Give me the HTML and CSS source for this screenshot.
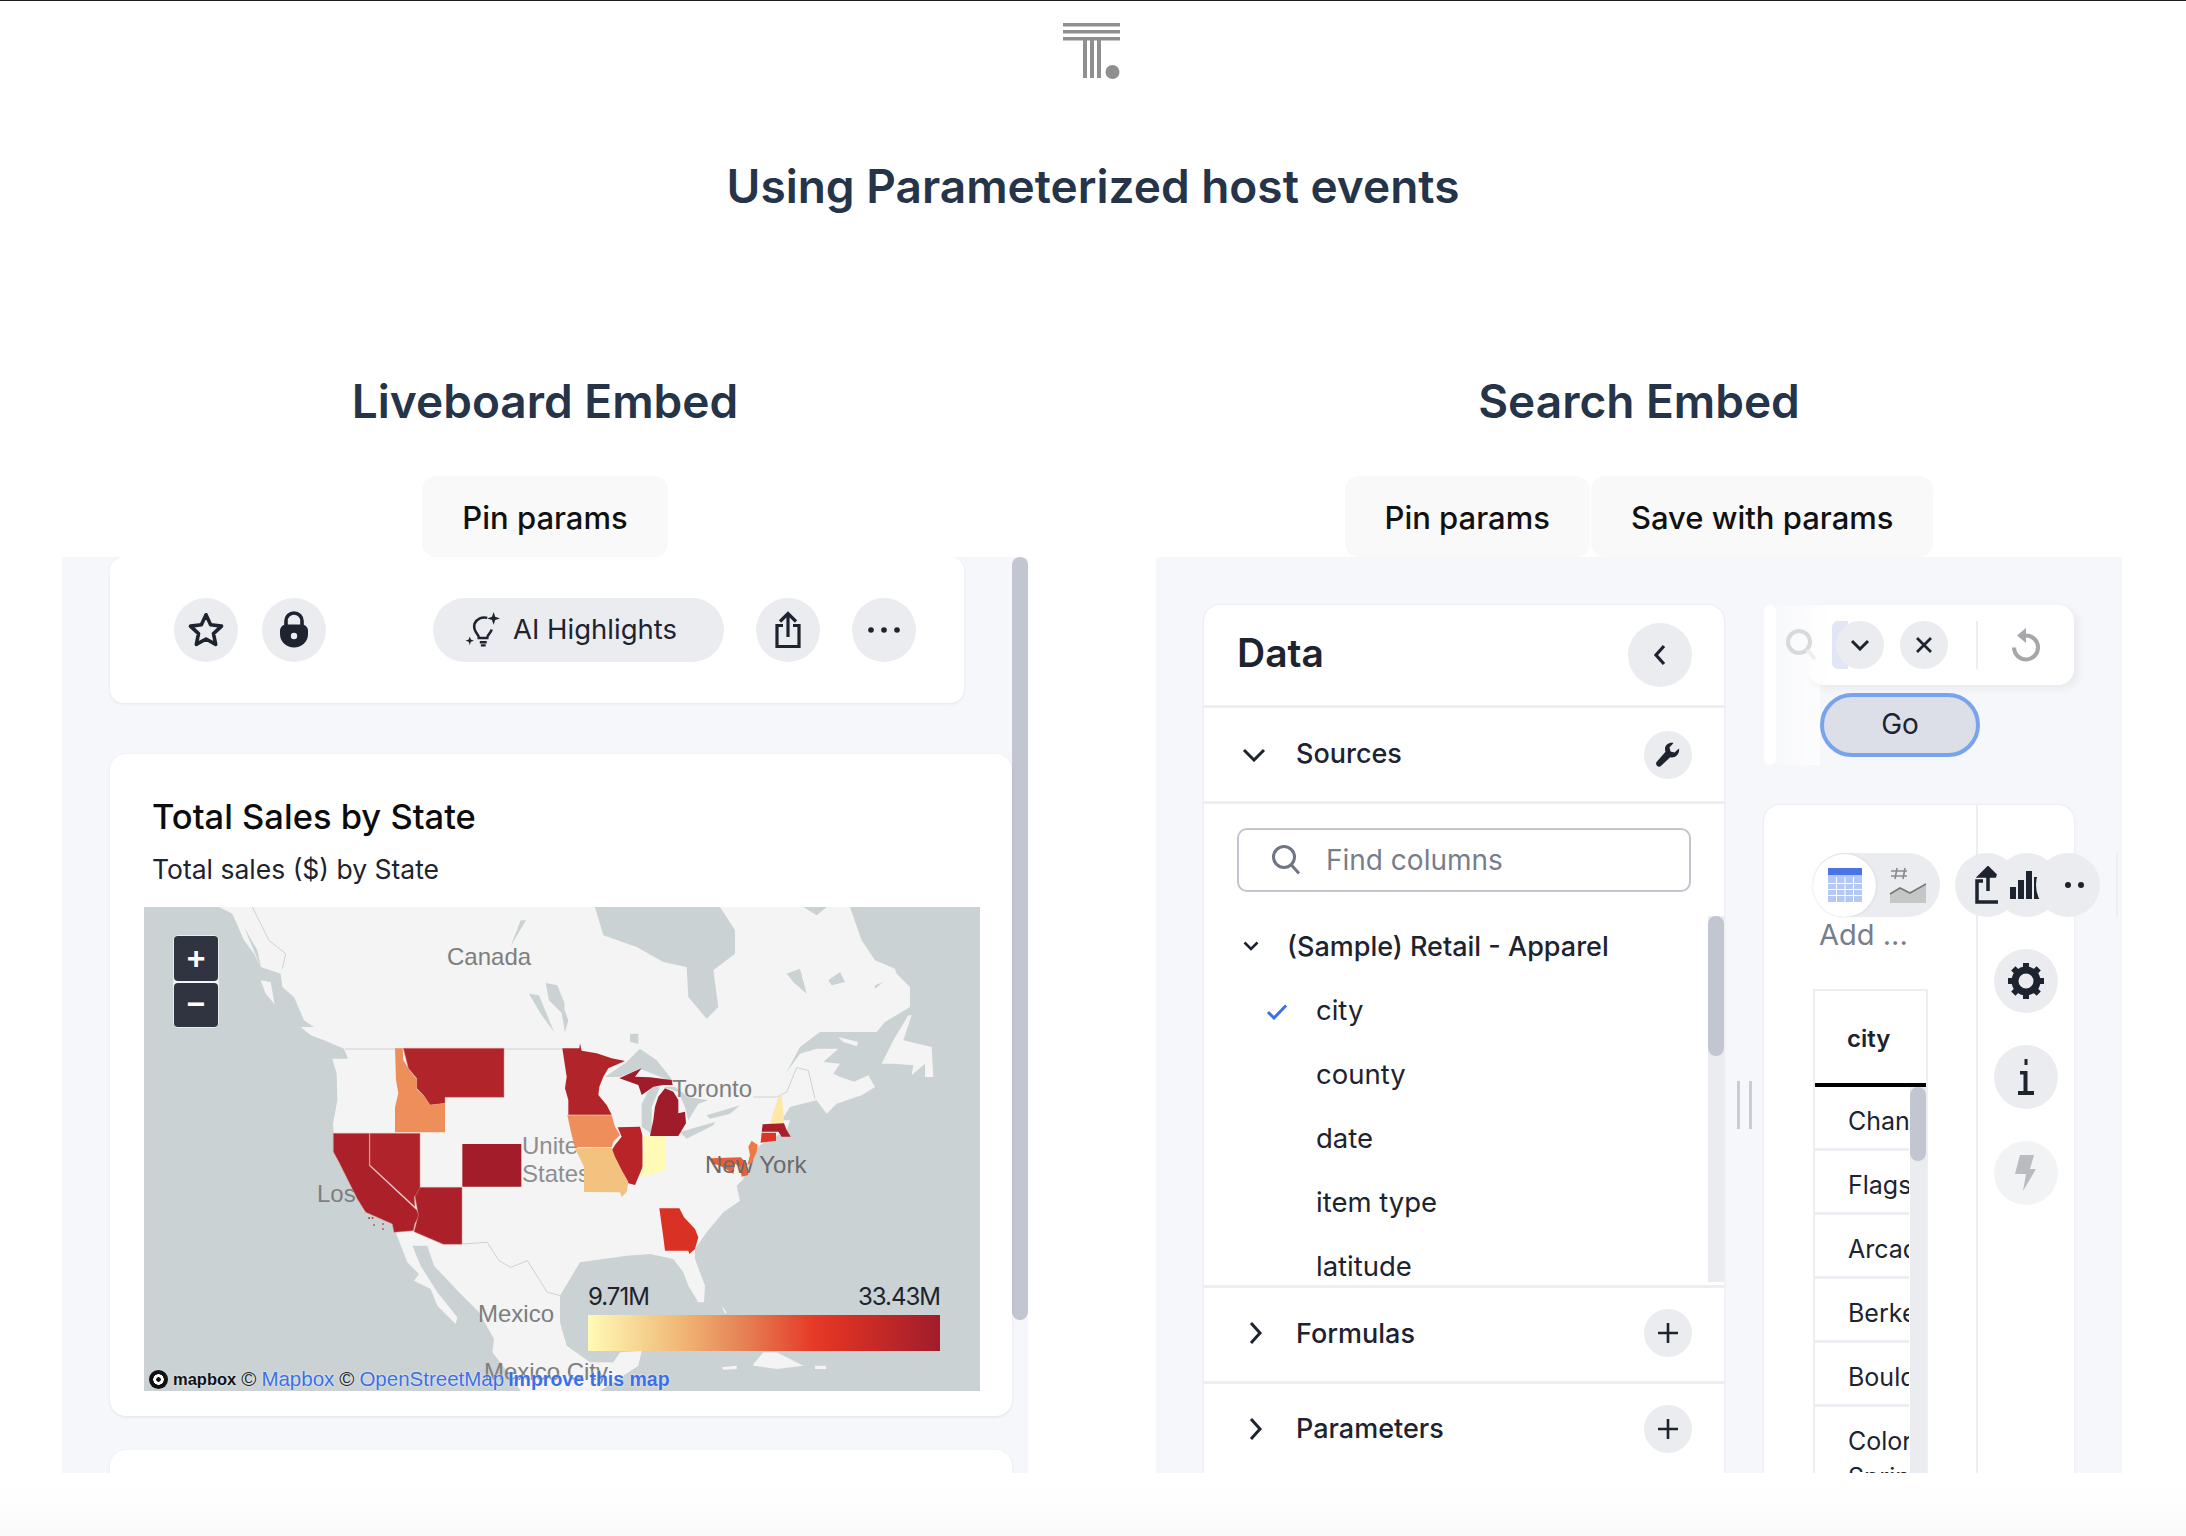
FILE: index.html
```html
<!DOCTYPE html>
<html lang="en">
<head>
<meta charset="utf-8">
<title>Using Parameterized host events</title>
<link rel="stylesheet" href="styles.css">
</head>
<body>
<div class="page">
  <header class="logo-row">
    <svg class="logo" width="58" height="56" viewBox="0 0 58 56">
      <g fill="#8f8f8f">
        <rect x="0" y="0" width="57" height="3.5"/><rect x="0" y="7" width="57" height="3.5"/><rect x="0" y="14" width="57" height="3.5"/>
        <rect x="20" y="17" width="4" height="38"/><rect x="27" y="17" width="4" height="38"/><rect x="34" y="17" width="4" height="38"/>
        <circle cx="49.5" cy="49" r="7"/>
      </g>
    </svg>
  </header>
  <h1 class="title">Using Parameterized host events</h1>
  <main class="embeds">
    <section class="embed">
      <h2 class="embed-title">Liveboard Embed</h2>
      <div class="btn-row"><button class="host-btn">Pin params</button></div>
      <div class="panel panel-live">
        <div class="live-content">
          <div class="lb-toolbar">
            <span class="circle c64"><svg width="40" height="40" viewBox="0 0 38 38"><path d="M19 4.500l4.400 9.600 10.400 1.200-7.700 7.100 2.100 10.300L19 27.500l-9.200 5.200 2.100-10.300-7.700-7.100 10.400-1.200z" fill="none" stroke="#1d232f" stroke-width="3.400" stroke-linejoin="round"/></svg></span>
            <span class="circle c64 gap-lock"><svg width="32" height="38" viewBox="0 0 32 38"><path d="M8 15V10a8 8 0 0 1 16 0v5" fill="none" stroke="#1d232f" stroke-width="3.600"/><path d="M2 20c0-4 3-6.500 6-6.500h16c3 0 6 2.500 6 6.500v3c0 8-6.500 13.500-14 13.500S2 31 2 23z" fill="#1d232f"/><circle cx="16" cy="25" r="3.200" fill="#eceef2"/></svg></span>
            <span class="ai-pill">
              <svg width="36" height="36" viewBox="0 0 34 34"><path d="M21 6.500A10 10 0 0 0 9 12c-1.500 5 1 8 3 10.500.8 1 1 2 1 3h8c0-1.500.8-3 2-4.200 1-1 1.800-2.300 2.200-3.800" fill="none" stroke="#1d232f" stroke-width="2.400"/><path d="M14 29.500h6.500M15 32.500h4.500" stroke="#1d232f" stroke-width="2.200"/><path d="M27 1l1.500 4.500L33 7l-4.500 1.500L27 13l-1.500-4.500L21 7l4.500-1.500zM4.500 24l1 3 3 1-3 1-1 3-1-3-3-1 3-1z" fill="#1d232f"/></svg>
              <span>AI Highlights</span>
            </span>
            <span class="circle c64 gap-share"><svg width="28" height="38" viewBox="0 0 28 38"><path d="M14 26V3M6 10.500L14 2.500l8 8" fill="none" stroke="#1d232f" stroke-width="3.200"/><path d="M9 14.500H3v21h22v-21h-6" fill="none" stroke="#1d232f" stroke-width="3.200"/></svg></span>
            <span class="circle c64 gap-more"><svg width="34" height="8" viewBox="0 0 34 8"><circle cx="4" cy="4" r="2.800" fill="#1d232f"/><circle cx="17" cy="4" r="2.800" fill="#1d232f"/><circle cx="30" cy="4" r="2.800" fill="#1d232f"/></svg></span>
          </div>
          <article class="chart-card">
            <h3 class="chart-title">Total Sales by State</h3>
            <p class="chart-sub">Total sales ($) by State</p>
            <div class="map">
              <svg class="map-svg" width="836" height="484" viewBox="144 907 836 484">
                <rect x="144" y="907" width="836" height="484" fill="#cad2d3"/>
                <g class="land" transform="translate(144 907) scale(.33333)">
                  <path fill="#f3f4f3" d="M225 0L265 20L300 100L330 140L350 180L410 200L415 240L450 270L480 340L510 360L470 360L500 385L540 400L600 425L612 455L565 455L578 500L580 580L567 650L570 690L568 726L585 766L610 816L640 876L665 916L745 951L755 976L790 1066L825 1101L810 1121L860 1146L880 1196L935 1251L940 1231L880 1156L830 1076L805 1016L850 1016L870 1076L945 1156L1005 1216L1050 1296L1045 1336L1100 1406L1130 1452L1368 1452L1483 1376L1493 1332L1428 1336L1408 1366L1338 1366L1268 1316L1248 1246L1248 1166L1308 1066L1378 1056L1448 1046L1518 1041L1588 1056L1618 1096L1633 1136L1663 1186L1680 1186L1683 1136L1653 1056L1653 1026L1688 976L1738 916L1788 881L1778 836L1798 816L1808 786L1838 726L1848 715L1928 670L1938 640L1913 640L1938 600L2018 580L2048 620L2078 590L2153 565L2193 540L2173 505L2128 525L2088 510L2068 500L2088 470L2038 465L2083 425L2018 425L1968 440L1928 495L1968 420L2028 375L2128 375L2198 375L2223 345L2298 300L2298 240L2258 200L2253 185L2193 160L2153 100L2118 0L2048 0L2018 25L1978 0L1728 0L1773 70L1773 140L1708 190L1723 300L1688 335L1633 270L1628 180L1558 165L1478 120L1378 85L1353 0Z"/>
                  <path fill="#f3f4f3" d="M350 220L380 225L392 292L365 260ZM2213 470L2248 400L2293 325L2303 325L2278 400L2363 420L2368 510L2343 510L2343 470L2303 505L2308 475L2248 470ZM2083 390L2143 405L2138 418L2098 405ZM2088 510L2133 525L2128 535ZM1733 1381L1778 1376L1778 1386L1738 1388ZM1828 1371L1858 1336L1898 1336L1978 1376L1898 1386L1828 1376ZM2013 1376L2046 1376L2046 1386L2013 1386ZM1733 1196L1748 1216L1743 1221Z"/>
                  <path fill="#cad2d3" d="M1130 40L1146 40L1100 118ZM1205 228L1240 235L1262 290L1260 325L1215 280ZM1155 260L1185 265L1230 375L1190 320ZM300 60L340 130L352 185L325 120ZM1248 270L1273 340L1263 375L1253 320ZM1458 380L1483 380L1483 410L1458 405ZM1383 510L1448 465L1488 425L1538 460L1578 510L1588 525L1488 485L1428 510ZM1523 535L1548 540L1523 600L1523 680L1493 660L1493 590ZM1558 540L1593 540L1633 570L1693 580L1663 590L1633 640L1623 600L1603 555ZM1608 675L1713 645L1708 655L1628 695ZM1688 625L1788 595L1758 620L1698 635ZM1928 200L1968 185L1988 260L1948 225ZM2053 220L2088 195L2103 225L2063 235ZM2193 235L2218 225L2193 245Z"/>
                  <path d="M603 426H1255M1473 450L1578 510M1828 570L1898 570L1928 555L1958 482L1993 490L2013 575M955 1011L1030 1006L1065 1061L1100 1081L1150 1061L1210 1156L1250 1166M325 0L375 100L425 140L415 185" fill="none" stroke="#cfd1d1" stroke-width="3"/>
                </g>
                <text class="maplabel" x="447" y="965">Canada</text>
                <text class="maplabel" x="672" y="1097">Toronto</text>
                <text class="maplabel light" x="522" y="1154">Unite</text>
                <text class="maplabel light" x="522" y="1182">States</text>
                <text class="maplabel" x="317" y="1202">Los</text>
                <text class="maplabel" x="478" y="1322">Mexico</text>
                <text class="maplabel" x="484" y="1380">Mexico City</text>
                <g transform="translate(320 1020) scale(.33333)">
                  <path fill="#ea5e36" d="M1172 415L1262 412L1280 430L1285 465L1265 470L1260 440L1245 432L1240 462L1215 445L1195 435L1178 432Z"/>
                </g>
                <text class="maplabel dark" x="705" y="1173">New York</text>
                <g transform="translate(320 1020) scale(.33333)" stroke="#d98b85" stroke-width="1.500">
                  <path fill="#b1242a" d="M250 85L552 85L552 232L375 232L375 250L330 255L310 225L290 205L290 175L265 145Z"/>
                  <path fill="#ee8f5b" stroke="none" d="M225 85L248 85L250 120L268 150L290 178L290 208L312 228L330 255L375 250L375 337L225 337L225 262L235 220L228 180Z"/>
                  <path fill="#b1242a" stroke="none" d="M727 85L778 85L780 70L785 92L830 100L875 115L915 123L865 145L850 170L838 200L835 225L860 255L875 284L745 284L745 240L735 205L740 170Z"/>
                  <path fill="#a11c2b" stroke="none" d="M898 175L940 155L965 145L945 170L990 172L1055 180L1058 195L1030 195L1000 200L965 225L955 195ZM1035 205L1060 215L1075 240L1075 280L1095 275L1098 310L1075 348L990 348L1000 300L1005 260L1015 230Z"/>
                  <path fill="#ee8f5b" stroke="none" d="M742 286L875 286L885 320L900 345L880 365L875 382L765 382L755 345Z"/>
                  <path fill="#b92429" stroke="none" d="M893 322L960 320L967 345L968 440L960 460L945 495L925 490L900 455L870 400L885 375L905 350Z"/>
                  <path fill="#f4c27f" stroke="none" d="M765 385L875 383L885 410L905 450L925 485L920 515L905 532L900 517L792 516L792 440Z"/>
                  <path fill="#fffbb6" stroke="none" d="M970 348L1038 348L1038 450L1000 462L960 472L968 440Z"/>
                  <path fill="#d93225" stroke="none" d="M1018 565L1078 565L1092 592L1125 627L1135 652L1125 687L1108 702L1105 692L1035 692L1030 652Z"/>
                  <path fill="#ab2029" d="M40 340L148 340L148 437L290 570L298 587L285 610L280 632L222 637L217 612L137 577L112 537L82 477L57 427L40 395Z"/>
                  <path fill="#b1232a" d="M150 340L300 340L300 520L283 530L285 560L150 435Z"/>
                  <path fill="#ab2029" d="M300 502L426 502L426 673L370 673L282 635L295 585L285 530Z"/>
                  <path fill="#a21c2a" stroke="none" d="M427 372L604 372L604 500L427 500Z"/>
                  <path fill="#fde9a5" stroke="none" d="M1378 225L1385 225L1392 300L1392 312L1350 312L1362 270Z"/>
                  <path fill="#a81e2a" stroke="none" d="M1328 313L1392 310L1400 330L1412 350L1385 350L1375 335L1325 335Z"/>
                  <path fill="#dc3425" stroke="none" d="M1325 338L1368 338L1368 362L1322 368Z"/>
                  <path fill="#ee7a42" stroke="none" d="M1295 362L1313 375L1310 395L1295 430L1282 435L1290 405L1285 380Z"/>
                  <path fill="#ab2029" stroke="none" d="M145 592h5v4h-5zM155 592h5v4h-5zM160 613h4v4h-4zM187 610h4v4h-4zM187 625h4v4h-4z"/>
                </g>
              </svg>
              <div class="zoom-ctl"><span class="zoom-btn">+</span><span class="zoom-btn">−</span></div>
              <div class="legend">
                <div class="legend-vals"><span>9.71M</span><span>33.43M</span></div>
                <div class="legend-bar"></div>
              </div>
              <div class="attrib">
                <span class="mb-logo"><i class="mb-dot"></i>mapbox</span>
                <span class="mb-c">©</span><span class="mb-link">Mapbox</span><span class="mb-c">©</span><span class="mb-link">OpenStreetMap</span><span class="mb-link strong">Improve this map</span>
              </div>
            </div>
          </article>
          <div class="next-card"></div>
        </div>
        <div class="live-scroll"></div>
      </div>
    </section>

    <section class="embed">
      <h2 class="embed-title">Search Embed</h2>
      <div class="btn-row btn-row-tight"><button class="host-btn">Pin params</button><button class="host-btn">Save with params</button></div>
      <div class="panel panel-search">
        <aside class="data-panel">
          <div class="data-head">
            <span class="data-title">Data</span>
            <span class="circle c64"><svg width="16" height="24" viewBox="0 0 16 24"><path d="M12 3L4 12l8 9" fill="none" stroke="#1d232f" stroke-width="3.200"/></svg></span>
          </div>
          <div class="data-row row-sources">
            <svg class="chev" width="24" height="14" viewBox="0 0 24 14"><path d="M2 2l10 10L22 2" fill="none" stroke="#1d232f" stroke-width="3"/></svg>
            <span class="row-label">Sources</span>
            <span class="circle c48"><svg width="28" height="28" viewBox="0 0 28 28"><path d="M25 7.500l-4.500 4-4-1-1-4 4-4.500c-4-1-8.500 1.500-8.500 6 0 1 .2 2 .5 2.800L3 20.500c-1.500 1.500-1 3.200 0 4.200s2.800 1.500 4.200 0l9-8.500c4.800 1.300 9.800-3 8.800-8.700z" fill="#1d232f"/></svg></span>
          </div>
          <div class="find-wrap">
            <div class="find">
              <svg width="32" height="32" viewBox="0 0 32 32"><circle cx="14" cy="13" r="10.500" fill="none" stroke="#6f7684" stroke-width="3"/><path d="M21.500 21L29 29.500" stroke="#6f7684" stroke-width="3"/></svg>
              <span>Find columns</span>
            </div>
          </div>
          <div class="col-list">
            <div class="col-scroll"><div class="col-thumb"></div></div>
            <div class="col-group">
              <svg width="16" height="10" viewBox="0 0 16 10"><path d="M1.500 1.500L8 8l6.500-6.500" fill="none" stroke="#1d232f" stroke-width="2.600"/></svg>
              <span>(Sample) Retail - Apparel</span>
            </div>
            <div class="col-item"><svg class="check" width="22" height="16" viewBox="0 0 22 16"><path d="M2 8l6 6L20 1.500" fill="none" stroke="#3d6fe5" stroke-width="3"/></svg><span>city</span></div>
            <div class="col-item"><span>county</span></div>
            <div class="col-item"><span>date</span></div>
            <div class="col-item"><span>item type</span></div>
            <div class="col-item"><span>latitude</span></div>
          </div>
          <div class="data-row row-formulas">
            <svg class="chev" width="14" height="24" viewBox="0 0 14 24"><path d="M3 2l9 10-9 10" fill="none" stroke="#1d232f" stroke-width="3"/></svg>
            <span class="row-label">Formulas</span>
            <span class="circle c48"><svg width="24" height="24" viewBox="0 0 24 24"><path d="M12 2v20M2 12h20" stroke="#1d232f" stroke-width="2.600"/></svg></span>
          </div>
          <div class="data-row row-params">
            <svg class="chev" width="14" height="24" viewBox="0 0 14 24"><path d="M3 2l9 10-9 10" fill="none" stroke="#1d232f" stroke-width="3"/></svg>
            <span class="row-label">Parameters</span>
            <span class="circle c48"><svg width="24" height="24" viewBox="0 0 24 24"><path d="M12 2v20M2 12h20" stroke="#1d232f" stroke-width="2.600"/></svg></span>
          </div>
        </aside>
        <div class="resizer"><i></i><i></i></div>
        <div class="work">
          <div class="search-area">
            <div class="strip"></div>
            <div class="fade"></div>
            <svg class="faint-search" width="36" height="36" viewBox="0 0 36 36"><circle cx="14" cy="14" r="11" fill="none" stroke="#d8d9db" stroke-width="4"/><path d="M22 22l8 9" stroke="#eeeeef" stroke-width="4"/></svg>
            <div class="search-col">
              <div class="search-bar">
                <span class="token"></span>
                <span class="circle c48 on-token"><svg width="20" height="12" viewBox="0 0 20 12"><path d="M2 2l8 8 8-8" fill="none" stroke="#1d232f" stroke-width="3"/></svg></span>
                <span class="circle c48 x-btn"><svg width="20" height="20" viewBox="0 0 20 20"><path d="M3 3l14 14M17 3L3 17" stroke="#1d232f" stroke-width="2.800"/></svg></span>
                <span class="vline"></span>
                <svg class="undo" width="30" height="34" viewBox="0 0 30 34"><path d="M15 7.500a12 12 0 1 1-12 12" fill="none" stroke="#a5a7aa" stroke-width="4"/><path d="M15 0v15L6 7.500z" fill="#a5a7aa"/></svg>
              </div>
              <button class="go">Go</button>
            </div>
          </div>
          <div class="viz-card">
            <div class="viz-main">
              <div class="viz-tools">
                <div class="toggle">
                  <span class="toggle-on">
                    <svg width="34" height="34" viewBox="0 0 34 34"><rect width="34" height="34" fill="#b5c8f3"/><rect width="34" height="7" fill="#4a74e6"/><path d="M8.500 9v25M17 9v25M25.500 9v25M0 15.500h34M0 21.500h34M0 27.500h34" stroke="#fff" stroke-width="1"/></svg>
                  </span>
                  <svg class="toggle-off" width="38" height="36" viewBox="0 0 38 36"><path d="M6 12l2-11M14 12l2-11M2 4h16M2 9h16" stroke="#8a8a8a" stroke-width="1.600" fill="none"/><path d="M1 27l10-6 10 5 16-9v19H1z" fill="#c6c6c6"/><path d="M1 27l10-6 10 5 16-9" fill="none" stroke="#777" stroke-width="1.600"/></svg>
                </div>
                <span class="circle c64 tool1"><svg width="24" height="38" viewBox="0 0 24 38"><path d="M13 25V3M5 10l8-8 8 8z" fill="#1d232f" stroke="#1d232f" stroke-width="3.500"/><path d="M8 15H2v21h21" fill="none" stroke="#1d232f" stroke-width="3.500"/></svg></span>
                <span class="circle c64 tool2"><svg class="bars" width="30" height="28" viewBox="0 0 30 28"><path d="M0 16h6v12H0zM8 9h6v19H8zM16 0h6v28h-6zM24 6h6v22h-6z" fill="#1d232f"/></svg></span>
                <span class="circle c64 tool3"><svg class="dots" width="20" height="6" viewBox="0 0 20 6"><circle cx="3" cy="3" r="3" fill="#1d232f"/><circle cx="16" cy="3" r="3" fill="#1d232f"/></svg></span>
              </div>
              <div class="add-label">Add ...</div>
              <div class="result-table">
                <div class="th">city</div>
                <div class="tbody">
                  <div class="td">Chandler</div>
                  <div class="td">Flagstaff</div>
                  <div class="td">Arcadia</div>
                  <div class="td">Berkeley</div>
                  <div class="td">Boulder</div>
                  <div class="td">Colorado Springs</div>
                </div>
                <div class="tscroll"><div class="tthumb"></div></div>
              </div>
            </div>
            <div class="viz-side">
              <span class="circle c64"><svg width="38" height="38" viewBox="0 0 38 38"><circle cx="19" cy="19" r="11" fill="none" stroke="#1d232f" stroke-width="7"/><path d="M19 1v7M19 30v7M1 19h7M30 19h7M6.300 6.300l5 5M26.700 26.700l5 5M6.300 31.700l5-5M26.700 11.300l5-5" stroke="#1d232f" stroke-width="6"/></svg></span>
              <span class="circle c64"><svg width="18" height="36" viewBox="0 0 18 36"><path d="M7.500 0h3v6h-3zM3 12h7.500v20H17v4H1v-4h5.500V15.500H3z" fill="#1d232f"/></svg></span>
              <span class="circle c64 faded"><svg class="bolt" width="22" height="36" viewBox="0 0 22 36"><path d="M6 0h14l-4 14h6L9 36l3-17H1z" fill="#8d8f93"/></svg></span>
            </div>
          </div>
          <div class="edge-line"></div>
        </div>
      </div>
    </section>
  </main>
  <footer class="foot"></footer>
</div>
</body>
</html>
```
FILE: styles.css
```css
* { box-sizing: border-box; }
html, body { margin: 0; padding: 0; background: #fff; }
body { font-family: Inter, "Noto Sans", sans-serif; color: #1d232f; }
.page { width: 2186px; height: 1536px; overflow: hidden; border-top: 1px solid #1c1c1c; display: flex; flex-direction: column; }
.logo-row { height: 79px; display: flex; justify-content: center; padding-top: 22px; padding-right: 2px; }
.logo { display: block; }
.title { margin: 76px 0 0; height: 60px; line-height: 60px; text-align: center; font-size: 46px; font-weight: 600; color: #253449; }
.embeds { display: grid; grid-template-columns: 966px 966px; column-gap: 128px; padding-left: 62px; margin-top: 157px; }
.embed { display: flex; flex-direction: column; }
.embed-title { margin: 0; height: 56px; line-height: 56px; text-align: center; font-size: 46px; font-weight: 600; color: #253449; }
.btn-row { display: flex; justify-content: center; margin-top: 47px; }
.btn-row-tight { gap: 1px; }
.host-btn { height: 81px; padding: 2px 40px 0; border: 0; border-radius: 14px; background: #f9f9f9; font: 500 31px Inter, sans-serif; color: #111; }
.panel { height: 916px; background: #f6f7fa; overflow: hidden; display: flex; }
.circle { flex: none; display: inline-flex; align-items: center; justify-content: center; border-radius: 50%; background: #ebecf0; }
.c64 { width: 64px; height: 64px; }
.c48 { width: 48px; height: 48px; }

/* Liveboard */
.panel-live { padding-left: 48px; }
.live-content { width: 902px; display: flex; flex-direction: column; flex: none; }
.live-scroll { width: 16px; height: 763px; background: #c1c6d0; border-radius: 8px; flex: none; }
.lb-toolbar { width: 854px; height: 146px; flex: none; background: #fff; border-radius: 14px; box-shadow: 0 1px 3px rgba(30,40,70,.09); display: flex; align-items: flex-start; padding: 41px 0 0 64px; }
.gap-lock { margin-left: 24px; }
.ai-pill { margin-left: 107px; width: 291px; height: 64px; padding: 0 0 2px 32px; border-radius: 32px; background: #ebecf0; display: flex; align-items: center; gap: 12px; font-size: 27.500px; }
.gap-share { margin-left: 32px; }
.gap-more { margin-left: 32px; }
.chart-card { margin-top: 51px; height: 662px; flex: none; background: #fff; border-radius: 16px; box-shadow: 0 1px 3px rgba(30,40,70,.1); padding: 41px 0 0 34px; position: relative; }
.chart-title { margin: 0 0 0 8px; font-size: 34.500px; line-height: 44px; font-weight: 500; color: #0c0c0c; }
.chart-sub { margin: 12px 0 0 8px; font-size: 26.500px; line-height: 36px; color: #1d232f; }
.map { position: relative; margin-top: 20px; width: 836px; height: 484px; overflow: hidden; }
.map-svg { display: block; }
.land { filter: blur(.5px); }
.maplabel { font-family: "Liberation Sans", Arial, sans-serif; font-size: 24px; fill: #7e7e7e; }
.maplabel.light { fill: #8e8e8e; }
.maplabel.dark { fill: #6a6a6a; }
.zoom-ctl { position: absolute; left: 30px; top: 29px; width: 44px; height: 91px; display: flex; flex-direction: column; background: #f4f5f6; gap: 2px; border-radius: 5px; box-shadow: 0 0 0 1px rgba(255,255,255,.6); }
.zoom-btn { flex: 1; display: flex; align-items: center; justify-content: center; background: #303441; color: #fff; font: 700 32px "Liberation Sans", sans-serif; border-radius: 4px; }
.legend { position: absolute; left: 444px; top: 374px; width: 352px; }
.legend-vals { display: flex; justify-content: space-between; font-size: 24px; line-height: 32px; letter-spacing: -1px; color: #1d232f; }
.legend-bar { margin-top: 2px; height: 36px; background: linear-gradient(90deg, #fffbb6 0%, #f0b574 27%, #e57f54 45%, #e63a27 64%, #d83024 73%, #a01c2b 100%); }
.attrib { position: absolute; left: 5px; bottom: -3px; height: 30px; display: flex; align-items: center; font: 20.500px "Liberation Sans", sans-serif; color: #222; white-space: nowrap; text-shadow: 0 0 2px #fff; }
.mb-logo { display: flex; align-items: center; gap: 5px; font: 700 16.500px "Liberation Sans", sans-serif; color: #111; }
.mb-dot { width: 19px; height: 19px; border-radius: 50%; background: radial-gradient(circle, #111 0 2px, #fff 2.500px 5px, #111 5.500px); }
.mb-c { margin: 0 5px; }
.mb-link { color: #3b6fe8; }
.strong { font-weight: 700; font-size: 19.500px; margin-left: 4px; }
.next-card { margin-top: 34px; height: 120px; flex: none; background: #fff; border-radius: 16px; box-shadow: 0 1px 3px rgba(30,40,70,.1); }

/* Search */
.panel-search { padding: 48px 0 0 48px; }
.data-panel { width: 520px; height: 920px; flex: none; background: #fff; border-radius: 16px 16px 0 0; box-shadow: 0 0 3px rgba(30,40,70,.1); display: flex; flex-direction: column; }
.data-head { height: 103px; flex: none; display: flex; align-items: flex-start; justify-content: space-between; padding: 18px 32px 0 33px; border-bottom: 3px solid #eceef2; }
.data-title { font-size: 39px; line-height: 60px; font-weight: 600; }
.data-row { flex: none; display: flex; align-items: center; padding: 0 32px 0 38px; border-bottom: 3px solid #eceef2; }
.row-sources { height: 96px; }
.row-sources .row-label { padding-bottom: 3px; }
.row-formulas { height: 99px; border-top: 3px solid #eceef2; padding-bottom: 3px; }
.row-params { height: 89px; border-bottom: 0; }
.chev { flex: none; }
.row-sources .chev { margin-right: 30px; }
.row-formulas .chev, .row-params .chev { margin: 0 34px 0 6px; }
.row-label { flex: 1; font-size: 27px; font-weight: 500; }
.find-wrap { flex: none; padding: 24px 33px 0; }
.find { height: 64px; border: 2px solid #c1c6d0; border-radius: 10px; display: flex; align-items: center; gap: 24px; padding-left: 31px; font-size: 28px; color: #777e8b; }
.col-list { position: relative; height: 393px; flex: none; overflow: hidden; }
.col-scroll { position: absolute; right: 0; top: 24px; bottom: 3px; width: 16px; background: #eaecf0; }
.col-thumb { height: 140px; background: #c1c6d0; border-radius: 8px; }
.col-group { height: 64px; margin-top: 22px; display: flex; align-items: center; gap: 28px; padding-left: 39px; font-size: 27px; font-weight: 500; }
.col-item { height: 64px; position: relative; display: flex; align-items: center; padding-left: 112px; font-size: 27.500px; }
.check { position: absolute; left: 62px; top: 26px; }
.resizer { width: 40px; flex: none; display: flex; gap: 9px; justify-content: center; padding-top: 476px; }
.resizer i { display: block; width: 3px; height: 48px; background: #c8ccd6; }
.work { position: relative; width: 310px; flex: none; }
.search-area { position: relative; height: 200px; display: flex; }
.strip { width: 12px; height: 160px; background: #fff; border-radius: 6px; flex: none; }
.fade { width: 44px; height: 160px; flex: none; background: linear-gradient(90deg, rgba(255,255,255,.25), rgba(255,255,255,.75)); }
.faint-search { position: absolute; left: 21px; top: 23px; z-index: 2; }
.search-col { margin-left: -12px; flex: none; }
.search-bar { width: 266px; height: 80px; background: linear-gradient(90deg, rgba(255,255,255,.4), #fff 20px); border-radius: 16px; box-shadow: 4px 3px 8px rgba(30,40,70,.07); display: flex; align-items: center; padding-left: 24px; }
.token { width: 16px; height: 48px; background: #e0e6f5; border-radius: 6px 0 0 6px; flex: none; }
.on-token { margin-left: -12px; }
.x-btn { margin-left: 16px; }
.vline { width: 2px; height: 48px; background: #eceef2; margin-left: 28px; flex: none; }
.undo { margin-left: 33px; }
.go { display: block; margin: 8px 0 0 12px; width: 160px; height: 64px; border: 4px solid #7aa3ed; border-radius: 32px; background: #dcdfe7; font: 400 28px Inter, sans-serif; color: #1d232f; padding: 0 0 2px; }
.viz-card { height: 720px; background: #fff; border-radius: 16px; box-shadow: 0 0 3px rgba(30,40,70,.1); display: flex; position: relative; }
.viz-main { width: 214px; flex: none; border-right: 2px solid #eceef2; padding: 48px 0 0 49px; }
.viz-tools { display: flex; width: 300px; position: relative; z-index: 1; }
.toggle { width: 127px; height: 64px; border-radius: 32px; background: #ebecf0; flex: none; display: flex; align-items: center; }
.toggle-on { width: 63px; height: 63px; border-radius: 50%; background: #fff; display: flex; align-items: center; justify-content: center; box-shadow: 0 0 3px rgba(0,0,0,.12); flex: none; }
.toggle-off { margin-left: 13px; }
.tool1 { margin-left: 15px; }
.tool2 { margin-left: -24px; }
.tool3 { margin-left: -23px; }
.bars { margin-left: -4px; }
.dots { margin-left: 14px; }
.bolt { margin-left: -2px; }
.add-label { margin-left: 6px; height: 36px; line-height: 36px; font-size: 29px; color: #777e8b; }
.result-table { position: relative; margin-top: 36px; width: 115px; height: 500px; border-left: 2px solid #eceef2; border-right: 2px solid #eceef2; border-top: 2px solid #eceef2; overflow: hidden; }
.th { height: 96px; padding: 32px 0 0 32px; font-size: 24px; line-height: 32px; font-weight: 600; border-bottom: 4px solid #000; }
.td { height: 64px; padding: 16px 0 0 33px; width: 94px; font-size: 25px; line-height: 36px; border-bottom: 3px solid #eceef2; overflow: hidden; }
.td:last-child { height: 100px; border-bottom: 0; }
.tbody { width: 94px; overflow: hidden; }
.tscroll { position: absolute; right: 0; top: 96px; bottom: 0; width: 16px; background: #eaecf0; }
.tthumb { height: 74px; background: #c1c6d0; border-radius: 8px; }
.viz-side { flex: 1; display: flex; flex-direction: column; align-items: center; gap: 32px; padding-top: 144px; }
.faded { opacity: .6; }
.edge-line { position: absolute; left: 352px; top: 248px; width: 2px; height: 64px; background: #eceef2; }
.foot { flex: 1; background: linear-gradient(180deg, #fff 20%, #fafafa 100%); }
```
